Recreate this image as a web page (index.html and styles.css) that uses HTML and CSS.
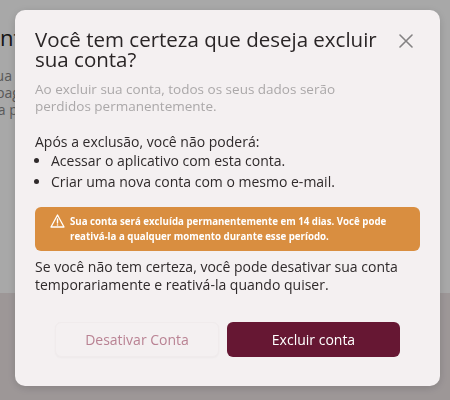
FILE: index.html
```html
<!DOCTYPE html>
<html lang="pt-BR">
<head>
   <meta charset="UTF-8">
   <meta name="viewport" content="width=device-width, initial-scale=1.0">
   <link rel="stylesheet" href="styles.css">
</head>
<body>
   <div class="page">
      <div class="page-card">
         <div class="page-inner">
            <h2 class="page-title">Gerenciar conta</h2>
            <p class="page-text">Você pode excluir sua conta a qualquer hora</p>
            <p class="page-text">Seus dados serão apagados da nossa base</p>
            <p class="page-text">Mais informações na política</p>
            <button class="page-btn">Excluir Conta</button>
         </div>
      </div>
   </div>

   <div class="overlay">
      <div class="modal">
         <div class="modal-head">
            <h1 class="modal-title">Você tem certeza que deseja excluir sua conta?</h1>
            <button class="close-btn" aria-label="Fechar">
               <svg width="14" height="14" viewBox="0 0 14 14">
                  <path d="M1 1 L13 13 M13 1 L1 13" stroke="#848283" stroke-width="1.6" stroke-linecap="round"/>
               </svg>
            </button>
         </div>
         <p class="modal-sub">Ao excluir sua conta, todos os seus dados serão perdidos permanentemente.</p>

         <p class="modal-text">Após a exclusão, você não poderá:</p>
         <ul class="modal-list">
            <li>Acessar o aplicativo com esta conta.</li>
            <li>Criar uma nova conta com o mesmo e-mail.</li>
         </ul>

         <div class="warning">
            <svg class="warning-icon" width="15" height="14" viewBox="0 0 15 14">
               <path d="M7.5 1 L14 13 H1 Z" fill="none" stroke="#fff" stroke-width="1.3" stroke-linejoin="round"/>
               <path d="M7.5 5 V9" stroke="#fff" stroke-width="1.4" stroke-linecap="round"/>
               <circle cx="7.5" cy="11" r="0.8" fill="#fff"/>
            </svg>
            <span>Sua conta será excluída permanentemente em 14 dias. Você pode reativá-la a qualquer momento durante esse período.</span>
         </div>

         <p class="modal-text modal-note">Se você não tem certeza, você pode desativar sua conta temporariamente e reativá-la quando quiser.</p>

         <div class="actions">
            <button class="btn btn-soft">Desativar Conta</button>
            <button class="btn btn-danger">Excluir conta</button>
         </div>
      </div>
   </div>
</body>
</html>
```

FILE: styles.css
```css
* {
   box-sizing: border-box;
}

body {
   margin: 0;
   width: 450px;
   height: 400px;
   overflow: hidden;
   font-family: "Open Sans", "Noto Sans", sans-serif;
   background-color: #eee5e6;
}

.page-card {
   height: 293px;
   background-color: #ffffff;
   overflow: hidden;
}

.page-inner {
   margin-left: -130px;
   padding-top: 24px;
}

.page-title {
   margin: 0 0 17px;
   font-size: 22px;
   font-weight: 500;
   line-height: 26px;
   color: #222;
}

.page-text {
   margin: 0;
   font-size: 14px;
   line-height: 17px;
   color: #888;
}

.page-btn {
   margin-top: 115px;
   height: 33px;
   padding: 0 14px;
   border: 2px solid #e7b9c3;
   border-radius: 4px;
   background-color: #6b1a36;
   color: #fff;
   font-family: inherit;
   font-size: 14px;
}

.overlay {
   position: fixed;
   inset: 0;
   background-color: rgba(0, 0, 0, 0.34);
   padding: 10px 0 0 15px;
}

.modal {
   width: 425px;
   height: 376px;
   padding: 19px 20px 0;
   border-radius: 10px;
   background-color: #f4f0f1;
   box-shadow: 0 2px 10px rgba(0, 0, 0, 0.15);
}

.modal-head {
   display: flex;
   align-items: flex-start;
   gap: 14px;
}

.modal-title {
   flex: 1;
   margin: 0;
   font-size: 20.5px;
   font-weight: 400;
   line-height: 20px;
   color: #2a2526;
}

.close-btn {
   margin: 5px 7px 0 0;
   padding: 0;
   border: none;
   background: none;
}

.modal-sub {
   max-width: 350px;
   margin: 12px 0 0;
   font-size: 13.5px;
   line-height: 17px;
   color: #aba8a9;
}

.modal-text {
   margin: 18px 0 0;
   font-size: 14px;
   line-height: 18px;
   color: #2f2a2b;
}

.modal-list {
   margin: 0;
   padding-left: 16px;
   font-size: 14px;
   color: #2f2a2b;
}

.modal-list li {
   line-height: 20px;
}

.modal-list li + li {
   margin-top: 1px;
}

.warning {
   display: flex;
   align-items: flex-start;
   gap: 5px;
   margin-top: 15px;
   padding: 7px 10px 7px 15px;
   border-radius: 6px;
   background-color: #d98e40;
   color: #fff;
   font-size: 9.7px;
   font-weight: 700;
   line-height: 15px;
}

.warning-icon {
   flex-shrink: 0;
}

.modal-note {
   margin-top: 7px;
}

.actions {
   display: flex;
   justify-content: center;
   gap: 8px;
   margin-top: 28px;
}

.btn {
   height: 35px;
   border-radius: 6px;
   font-family: inherit;
   font-size: 14px;
}

.btn-soft {
   width: 164px;
   border: 1px solid #f0ebec;
   background-color: #f4f0f1;
   color: #b98293;
   box-shadow: 0 1px 2px rgba(0, 0, 0, 0.03);
}

.btn-danger {
   width: 173px;
   border: none;
   background-color: #661733;
   color: #fff;
   font-weight: 500;
}
```
